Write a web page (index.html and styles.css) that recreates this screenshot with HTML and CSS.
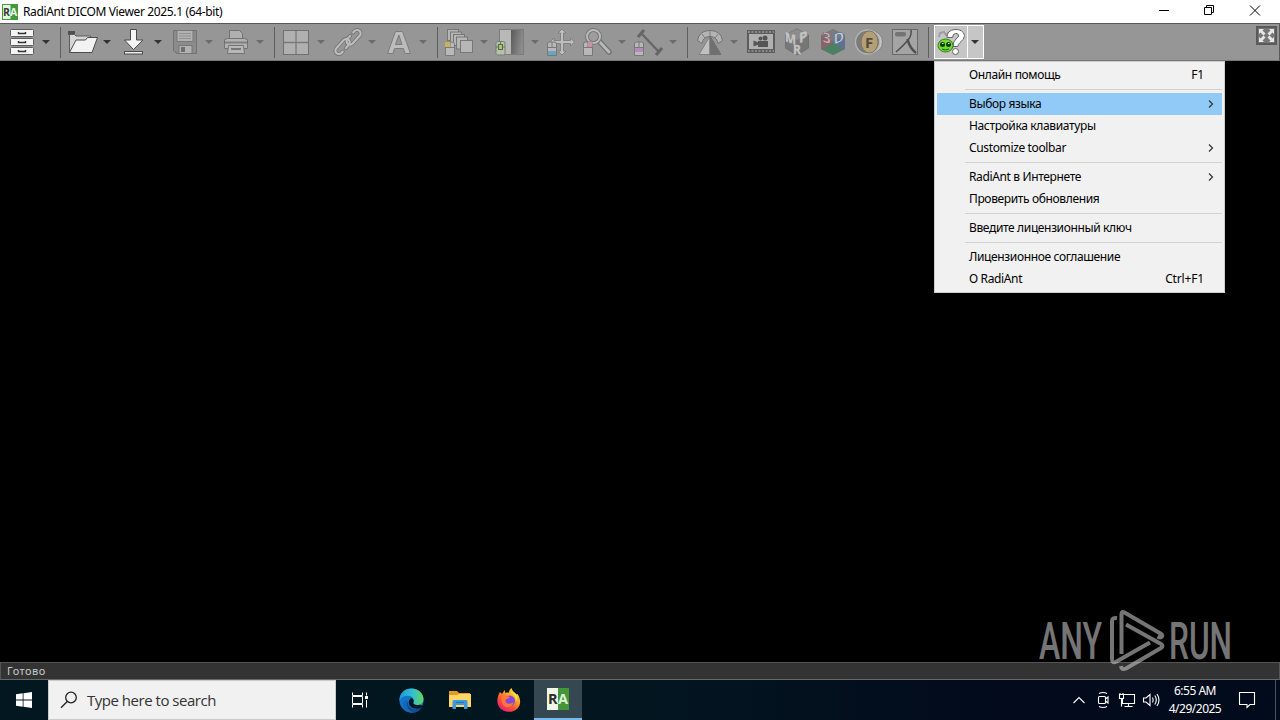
FILE: index.html
```html
<!DOCTYPE html>
<html lang="ru">

<head>
    <meta charset="UTF-8">
    <meta name="viewport" content="width=device-width, initial-scale=1.0">
    <title>RadiAnt DICOM Viewer</title>
    <link rel="stylesheet" href="styles.css">
</head>

<body>
    <div class="desktop">
        <!-- Title bar -->
        <header class="titlebar">
            <svg class="app-icon" viewBox="0 0 16 16">
                <rect width="16" height="16" fill="#3f9a3c"/>
                <rect x="1" y="1" width="7.5" height="14" fill="#e9f3e4"/>
                <text x="1" y="12" font-size="10.5" font-weight="700" fill="#33432f">R</text>
                <text x="8" y="12" font-size="10.5" font-weight="700" fill="#e9f6e4">A</text>
            </svg>
            <span class="title">RadiAnt DICOM Viewer 2025.1 (64-bit)</span>
            <div class="window-buttons">
                <svg viewBox="0 0 46 23"><path d="M19 10.500h10"/></svg>
                <svg viewBox="0 0 46 23"><path d="M18.500 7.500h7v7h-7zM20.500 7.500v-2h7v7h-2"/></svg>
                <svg viewBox="0 0 46 23"><path d="M18 5.500l10 10M28 5.500l-10 10"/></svg>
            </div>
        </header>

        <!-- Toolbar -->
        <nav class="toolbar">
            <div class="tool split">
                <svg class="icon" viewBox="0 0 32 32">
                    <g fill="#f4f4f4" stroke="#5c5c5c">
                        <rect x="4.500" y="3.500" width="23" height="7" rx="1"/>
                        <rect x="4.500" y="12.500" width="23" height="7" rx="1"/>
                        <rect x="4.500" y="21.500" width="23" height="7" rx="1"/>
                    </g>
                    <path d="M12.500 6v1.500h7V6M12.500 15v1.500h7V15M12.500 24v1.500h7V24" fill="none" stroke="#333" stroke-width="1.400"/>
                </svg>
                <i class="arrow"></i>
            </div>
            <div class="sep"></div>

            <div class="tool split">
                <svg class="icon" viewBox="0 0 32 32">
                    <path d="M1 5h7v4H1z" fill="#505050"/>
                    <path d="M2.500 26.500V8.500h5l1.500 1.500h14.500v5z" fill="#d6d6d6" stroke="#5c5c5c"/>
                    <path d="M2.500 26.500L9 14h9.500l2-2.500h10L25 26.500z" fill="#f2f2f2" stroke="#4c4c4c"/>
                </svg>
                <i class="arrow"></i>
            </div>
            <div class="tool split">
                <svg class="icon" viewBox="0 0 32 32">
                    <path d="M12.500 3.500h6v10.500h6.500L15.500 23.500 6.500 14h6z" fill="#f5f5f5" stroke="#4a4a4a"/>
                    <rect x="6.500" y="25.500" width="18" height="2.500" fill="#eee" stroke="#4a4a4a"/>
                </svg>
                <i class="arrow"></i>
            </div>
            <div class="tool split disabled">
                <svg class="icon" viewBox="0 0 32 32">
                    <path d="M4.500 4.500h23v23H8l-3.500-3z" fill="#8b8b8b" stroke="#727272"/>
                    <path d="M8 4.500h16v11H8z" fill="#b2b2b2" stroke="#777"/>
                    <path d="M10 7.500h12M10 10h12M10 12.500h12" stroke="#909090"/>
                    <path d="M10 19.500h13v8H10z" fill="#b2b2b2" stroke="#777"/>
                    <path d="M12 21h4v5h-4z" fill="#6e6e6e"/>
                </svg>
                <i class="arrow"></i>
            </div>
            <div class="tool split disabled">
                <svg class="icon" viewBox="0 0 32 32">
                    <path d="M9.500 4.500h10l3 3v6h-13z" fill="#b0b0b0" stroke="#727272"/>
                    <path d="M4.500 13.500l3-1h17l3 1v9h-23z" fill="#b2b2b2" stroke="#727272"/>
                    <path d="M5 16.500h22" stroke="#808080" stroke-width="2"/>
                    <path d="M8.500 19.500h15l1 8h-17z" fill="#b8b8b8" stroke="#727272"/>
                    <path d="M11 23h10" stroke="#777" stroke-width="2"/>
                </svg>
                <i class="arrow"></i>
            </div>
            <div class="sep"></div>

            <div class="tool split disabled">
                <svg class="icon" viewBox="0 0 32 32">
                    <rect x="2.500" y="4.500" width="25" height="24" fill="#b0b0b0" stroke="#707070"/>
                    <path d="M3 16.500h24M15 5v23" stroke="#7a7a7a" stroke-width="1.300"/>
                </svg>
                <i class="arrow"></i>
            </div>
            <div class="tool split disabled">
                <svg class="icon" viewBox="0 0 32 32">
                    <g transform="rotate(-48 16 16)" fill="none" stroke-linecap="round">
                        <g stroke="#777" stroke-width="3.800">
                            <path d="M10 18.500H14.500a3.500 3.500 0 0 0 0-7H3.500a3.500 3.500 0 0 0 0 7h2M22 13.500h-4a3.500 3.500 0 0 0 0 7H28.500a3.500 3.500 0 0 0 0-7h-2"/>
                        </g>
                        <g stroke="#bebebe" stroke-width="2">
                            <path d="M10 18.500H14.500a3.500 3.500 0 0 0 0-7H3.500a3.500 3.500 0 0 0 0 7h2M22 13.500h-4a3.500 3.500 0 0 0 0 7H28.500a3.500 3.500 0 0 0 0-7h-2"/>
                        </g>
                    </g>
                </svg>
                <i class="arrow"></i>
            </div>
            <div class="tool split disabled">
                <svg class="icon" viewBox="0 0 32 32">
                    <path d="M4.500 27.500L12.500 5.500h7l8 22h-5.500l-1.500-5h-9l-1.500 5zM12.500 18.500h6.500L15.800 9z" fill="#bcbcbc" stroke="#7c7c7c" fill-rule="evenodd"/>
                </svg>
                <i class="arrow"></i>
            </div>
            <div class="sep"></div>

            <div class="tool split disabled">
                <svg class="icon" viewBox="0 0 32 32">
                    <g fill="#b6b6b6" stroke="#777">
                        <rect x="3.500" y="3.500" width="11" height="11"/>
                        <rect x="6.500" y="6" width="11" height="11"/>
                        <rect x="9.500" y="8.500" width="11" height="11"/>
                        <rect x="12.500" y="11" width="11" height="12"/>
                        <rect x="16.500" y="14.500" width="12" height="12"/>
                    </g>
                    <path d="M1.500 20.500V18q0-2 3-2h3q3 0 3 2v11.500h-9z" fill="#b9b9b9" stroke="#7a7a7a"/>
                    <path d="M1.500 21.500h9M6 16v5" stroke="#7a7a7a"/>
                    <rect x="1" y="16" width="5" height="5" fill="#c9b25a"/>
                </svg>
                <i class="arrow"></i>
            </div>
            <div class="tool split disabled">
                <svg class="icon" viewBox="0 0 32 32">
                    <defs>
                        <linearGradient id="level" x1="0" x2="1" y1="0" y2=".3"><stop stop-color="#5a5a5a"/><stop offset="1" stop-color="#8b8b8b"/></linearGradient>
                    </defs>
                    <rect x="5" y="4" width="12" height="24" fill="#b8b8b8"/>
                    <rect x="16" y="4" width="12" height="24" fill="url(#level)"/>
                    <rect x="4.500" y="3.500" width="24" height="25" fill="none" stroke="#7c7c7c"/>
                    <rect x="1" y="15.500" width="9" height="13.500" rx="1.500" fill="#b8bfae" stroke="#73806a"/>
                    <path d="M1 21h9M5.500 16v5" stroke="#687a57"/>
                    <rect x="3.500" y="18.500" width="4" height="5" fill="#a9c081" stroke="#52703a"/>
                </svg>
                <i class="arrow"></i>
            </div>
            <div class="tool disabled">
                <svg class="icon" viewBox="0 0 32 32">
                    <path d="M16 3l4 4h-2.500v7.500h7V12l4 4-4 4v-2.500h-7V25H20l-4 4-4-4h2.500v-7.500H8V20l-4-4 4-4v2.500h6.500V7H12z" fill="#bebebe" stroke="#777" stroke-width=".8"/>
                    <path d="M1.500 22.500V18q0-2 2-2h5q2 0 2 2v11.500h-9z" fill="#b8b8b8" stroke="#777"/>
                    <path d="M2 21.500h8M6 16v5.500" stroke="#777"/>
                    <rect x="2" y="25" width="8" height="4" fill="#6ba4c2"/>
                </svg>
            </div>
            <div class="tool split disabled">
                <svg class="icon" viewBox="0 0 32 32">
                    <path d="M17 15l10 11" stroke="#6f6f6f" stroke-width="5.500" stroke-linecap="round"/>
                    <path d="M17 15l10 11" stroke="#b8b8b8" stroke-width="3" stroke-linecap="round"/>
                    <circle cx="11.500" cy="10.500" r="6.500" fill="#9e9e9e" stroke="#757575" stroke-width="4"/>
                    <circle cx="11.500" cy="10.500" r="6.500" fill="none" stroke="#bcbcbc" stroke-width="2"/>
                    <path d="M1.500 22.500V18q0-2 2-2h5q2 0 2 2v11.500h-9z" fill="#b8b8b8" stroke="#777"/>
                    <path d="M2 21.500h8M6 16v5.500" stroke="#777"/>
                    <rect x="6" y="16" width="4.500" height="5" fill="#c9929c"/>
                </svg>
                <i class="arrow"></i>
            </div>
            <div class="tool split disabled">
                <svg class="icon" viewBox="0 0 32 32">
                    <path d="M8 7l18 19" stroke="#656565" stroke-width="2.200"/>
                    <path d="M5 11l6-7M23 29l6-7" stroke="#656565" stroke-width="3"/>
                    <path d="M1.500 22.500V18q0-2 2-2h5q2 0 2 2v11.500h-9z" fill="#b8b8b8" stroke="#777"/>
                    <path d="M2 21.500h8M6 16v5.500" stroke="#777"/>
                    <rect x="2" y="22" width="8" height="4" fill="#b78cbd"/>
                </svg>
                <i class="arrow"></i>
            </div>
            <div class="sep"></div>

            <div class="tool split disabled">
                <svg class="icon" viewBox="0 0 32 32">
                    <path d="M3.500 14.500Q5 4.500 16 4.500t12.500 10l-4.500 3Q23 10.500 16 10.500t-8 7z" fill="#b4b4b4" stroke="#747474"/>
                    <path d="M8 8l3 4M16 4.500v6M24 8l-3 4" stroke="#7c7c7c"/>
                    <path d="M16 10L5 28.500h11z" fill="#c0c0c0" stroke="#808080"/>
                    <path d="M16 10l11 18.500H16z" fill="#707070" stroke="#707070"/>
                </svg>
                <i class="arrow"></i>
            </div>
            <div class="tool disabled">
                <svg class="icon" viewBox="0 0 32 32">
                    <rect x="2" y="4" width="28" height="23" fill="#5c5c5c"/>
                    <rect x="4" y="8" width="24" height="15" fill="#b0b0b0"/>
                    <path d="M3 6h26M3 25h26" stroke="#979797" stroke-width="1.500" stroke-dasharray="2 1.500"/>
                    <rect x="13" y="15" width="10" height="6" fill="#555"/>
                    <circle cx="15.500" cy="12.500" r="2" fill="#555"/>
                    <circle cx="20" cy="12" r="2.500" fill="#555"/>
                    <path d="M8.500 14.500l5 2v2l-5 2z" fill="#555"/>
                </svg>
            </div>
            <div class="tool disabled">
                <svg class="icon" viewBox="0 0 32 32">
                    <path d="M16 3l11.500 6v13L16 29 4.500 22V9z" fill="#777" stroke="#6e6e6e"/>
                    <path d="M16 3l11.500 6L16 14 4.500 9z" fill="#8c8c8c"/>
                    <g font-weight="700" fill="#c4c4c4" stroke="#c4c4c4" stroke-width=".3">
                        <text x="4.500" y="0" font-size="13" transform="matrix(.9 .3 0 1 0 14)">M</text>
                        <text x="19" y="0" font-size="14" transform="matrix(.95 -.3 0 1 0 23)">P</text>
                        <text x="12" y="28" font-size="12">R</text>
                    </g>
                </svg>
            </div>
            <div class="tool disabled">
                <svg class="icon" viewBox="0 0 32 32">
                    <path d="M16 3l12 6v14l-12 6-12-6V9z" fill="#777"/>
                    <path d="M4 9l12 6v14L4 23z" fill="#86646a"/>
                    <path d="M28 9l-12 6v14l12-6z" fill="#5f7192"/>
                    <path d="M16 3l12 6-12 6L4 9z" fill="#777b82"/>
                    <path d="M16 17l11 6-11 6-11-6z" fill="#4d8062"/>
                    <g font-size="14.500" font-weight="700" stroke-width=".4">
                        <text x="5.500" y="0" fill="#d3b3b8" stroke="#744d56" transform="matrix(1 .3 0 1 0 14)">3</text>
                        <text x="16.500" y="0" fill="#c0cddc" stroke="#475d77" transform="matrix(1 -.3 0 1 0 23.500)">D</text>
                    </g>
                </svg>
            </div>
            <div class="tool disabled">
                <svg class="icon" viewBox="0 0 32 32">
                    <circle cx="18" cy="16" r="11.500" fill="#c6c6c6" stroke="#808080"/>
                    <circle cx="14.500" cy="16" r="12" fill="#7b7b7b" stroke="#b4b4b4" stroke-width="1.300"/>
                    <ellipse cx="16.500" cy="16" rx="8.500" ry="11" fill="#b3a077" stroke="#81755c"/>
                    <text x="12" y="21.500" font-size="15" font-weight="700" fill="#534b37">F</text>
                </svg>
            </div>
            <div class="tool disabled">
                <svg class="icon" viewBox="0 0 32 32">
                    <rect x="3.500" y="3.500" width="25" height="25" fill="#a4a4a4" stroke="#696969"/>
                    <rect x="6" y="6" width="11" height="4.500" rx="2" fill="#737373"/>
                    <path d="M22 4q1 5-3 10T7 26" fill="none" stroke="#515151" stroke-width="1.600"/>
                    <path d="M18.500 13q2 9 8.500 14" fill="none" stroke="#515151" stroke-width="2.500"/>
                </svg>
            </div>
            <div class="sep"></div>

            <div class="tool split help">
                <svg class="icon" viewBox="0 0 32 32">
                    <path d="M3 11l1-4 4-1 2 3M10 10q1-4 5-3" fill="none" stroke="#a09ba6" stroke-width="2"/>
                    <path d="M11 11.500Q11 4 19 3.500t9.500 6q0 4-4.500 7-2 1.500-2 4h-5q0-5 3-7.500 3-2 2.500-4-.5-2-3-1.500-2.500 0-3 4z" fill="#fff" stroke="#666"/>
                    <circle cx="19.500" cy="25.500" r="3" fill="#fff" stroke="#666"/>
                    <ellipse cx="9.500" cy="19.500" rx="7.500" ry="6.500" fill="#6fdc34" stroke="#397d1e"/>
                    <circle cx="6.500" cy="18.500" r="2.500" fill="#183c12"/>
                    <circle cx="12.500" cy="18.500" r="2.500" fill="#183c12"/>
                    <path d="M6 17.500h1.500M12 17.500h1.500" stroke="#dfffba"/>
                    <path d="M6 23q3.500 2 7 0" fill="none" stroke="#215d12"/>
                </svg>
                <i class="arrow"></i>
            </div>

            <svg class="fullscreen" viewBox="0 0 21 19">
                <rect x="1" y="1" width="19" height="17" fill="#777" stroke="#5a5a5a" stroke-width="2"/>
                <path d="M3 8V3h5L6.500 4.500l3 3-2 2-3-3zM18 8V3h-5l1.500 1.500-3 3 2 2 3-3zM3 11v5h5l-1.500-1.500 3-3-2-2-3 3zM18 11v5h-5l1.500-1.500-3-3 2-2 3 3z" fill="#e8e8e8"/>
            </svg>
        </nav>

        <!-- Image area -->
        <main class="viewport"></main>

        <footer class="statusbar">Готово</footer>

        <!-- Windows taskbar -->
        <div class="taskbar">
            <div class="start">
                <svg width="16" height="16" viewBox="0 0 16 16"><path d="M0 2.300L6.700 1.300v6.300H0zM7.500 1.200L16 0v7.600H7.500zM0 8.400h6.700v6.300L0 13.700zM7.500 8.400H16V16l-8.500-1.200z" fill="#fff"/></svg>
            </div>
            <div class="search">
                <svg width="18" height="18" viewBox="0 0 18 18" fill="none" stroke="#222" stroke-width="1.300"><circle cx="11" cy="6.500" r="5.300"/><path d="M7.200 10.500L1 16.800"/></svg>
                <span>Type here to search</span>
            </div>
            <div class="task task-view">
                <svg width="18" height="18" viewBox="0 0 18 18" fill="none" stroke="#fff"><path d="M1.500 1.500v3h10v-3M1.500 5.500h10v7h-10zM1.500 16.500v-3h10v3M15.500 1.500v3M15.500 9v7.500"/><path d="M14 6.500h3" stroke-width="3"/></svg>
            </div>
            <div class="task">
                <svg width="25" height="25" viewBox="0 0 25 25">
                    <defs>
                        <linearGradient id="edgeTop" x1="0" x2="1"><stop stop-color="#1c98de"/><stop offset=".55" stop-color="#35bfd0"/><stop offset="1" stop-color="#62d85b"/></linearGradient>
                    </defs>
                    <circle cx="12.500" cy="12.500" r="12" fill="#1374c8"/>
                    <path d="M.5 13C0 5 6 .5 12.500.5 20 .5 24.500 6 24.500 11c0 4-3 6-6.500 6-2.500 0-4-1-3.500-2.300.8-1.500.8-3-.5-4.500C11 6.500 3 7 .5 13z" fill="url(#edgeTop)"/>
                    <path d="M9 12.500c-2 5 1 11 8 11.500-8 3-14-3-13-8 .5-3 2.500-4.500 5-3.500z" fill="#1667b7"/>
                    <path d="M9 13c-1 4 3 9 9 8 2-.3 3.500-1.200 5-2.500-1.500 3.500-4 5.500-7 6C9 24 6 17 9 13z" fill="#114c96"/>
                    <path d="M13.500 10.500c2 2 .8 3.500.8 4.500 0 1.600 2.700 2.500 6 1.700l4 1.300-1.500 1.500c-6 3-13 0-13-5 0-3 2-5 3.700-4z" fill="#021820"/>
                </svg>
            </div>
            <div class="task">
                <svg width="22" height="20" viewBox="0 0 22 20">
                    <path d="M0 1h8l2 2h11v4H0z" fill="#e59b23"/>
                    <path d="M0 5h8l2-1h12v13H0z" fill="#ffd667"/>
                    <path d="M3.500 19v-7.500q0-1.500 1.500-1.500h12q1.500 0 1.500 1.500V19H15v-4H7v4z" fill="#3c9ada"/>
                    <path d="M7 12.500h8" stroke="#2470b2"/>
                </svg>
            </div>
            <div class="task">
                <svg width="24" height="24" viewBox="0 0 24 24">
                    <defs>
                        <linearGradient id="fox" x1=".9" x2=".2" y1="0" y2="1"><stop stop-color="#fff047"/><stop offset=".35" stop-color="#ffad2e"/><stop offset=".65" stop-color="#ff5530"/><stop offset="1" stop-color="#e51584"/></linearGradient>
                    </defs>
                    <path d="M3 4l2 2c1-2 2-3 3-4v3c2-.8 3-.5 4-.2C12 3 13 1 14.500 0c.5 3 3 4 5 6.500l1-.5c4 6 3 11 0 14.500-4 4-11 4.500-16 1S-1 10 3 4z" fill="url(#fox)"/>
                    <circle cx="12.500" cy="13" r="5.500" fill="#8447dc"/>
                    <path d="M4 9c3-3 6-1 9 0-1 2-4 1-4.500 4 1 4 6 3 8 1-1 6-8 7-11 2z" fill="#ff7636"/>
                    <path d="M14 4c3 2 5 5 5 9 2-2 1-5 0-7z" fill="#ffe34a"/>
                </svg>
            </div>
            <div class="task active">
                <svg width="22" height="22" viewBox="0 0 22 22">
                    <rect width="22" height="22" fill="#439739"/>
                    <rect width="11" height="22" fill="#f0f7e8"/>
                    <text x="1" y="16" font-size="14.500" font-weight="700" fill="#273026">R</text>
                    <text x="11" y="16" font-size="14.500" font-weight="700" fill="#dff0d7">A</text>
                </svg>
            </div>

            <div class="tray">
                <svg viewBox="0 0 24 24"><path d="M6.500 15l5.500-5.500 5.500 5.500"/></svg>
                <svg viewBox="0 0 24 24"><path d="M8.500 8.500h5q1 0 1 1v5q0 1-1 1h-5q-1 0-1-1v-5q0-1 1-1zM14.500 11l2.500-2v6l-2.500-2M8 5.500q4-2 8 0M8 18.500q4 2 8 0"/></svg>
                <svg viewBox="0 0 24 24"><path d="M8 6.500h11.500v9H7.500V11M13.500 15.500v3M9.500 18.500h8M4.500 6.500h4v4h-4zM6.500 10.500v8M5 5v2M8 5v2"/></svg>
                <svg viewBox="0 0 24 24"><path d="M4.500 10v4h2.500l4 3.500v-11L7 10zM13.500 9.500q1.500 2.500 0 5M15.800 7.500q3 4.500 0 9M18 6q4 6 0 12"/></svg>
                <div class="clock">
                    <span>6:55 AM</span>
                    <span>4/29/2025</span>
                </div>
                <svg class="notice" viewBox="0 0 24 24"><path d="M4.500 4.500h15v12H15l-3 3v-3H4.500z"/></svg>
                <div class="show-desktop"></div>
            </div>
        </div>

        <!-- Help menu -->
        <ul class="menu">
            <li class="item"><span>Онлайн помощь</span><kbd>F1</kbd></li>
            <li class="divider"></li>
            <li class="item selected"><span>Выбор языка</span><svg class="more" viewBox="0 0 6 8"><path d="M1 .5L4.500 4 1 7.500"/></svg></li>
            <li class="item"><span>Настройка клавиатуры</span></li>
            <li class="item"><span>Customize toolbar</span><svg class="more" viewBox="0 0 6 8"><path d="M1 .5L4.500 4 1 7.500"/></svg></li>
            <li class="divider"></li>
            <li class="item"><span>RadiAnt в Интернете</span><svg class="more" viewBox="0 0 6 8"><path d="M1 .5L4.500 4 1 7.500"/></svg></li>
            <li class="item"><span>Проверить обновления</span></li>
            <li class="divider"></li>
            <li class="item"><span>Введите лицензионный ключ</span></li>
            <li class="divider"></li>
            <li class="item"><span>Лицензионное соглашение</span></li>
            <li class="item"><span>О RadiAnt</span><kbd>Ctrl+F1</kbd></li>
        </ul>

        <!-- Watermark -->
        <svg class="watermark" viewBox="0 0 240 70">
            <g class="watermark-text">
                <text x="3" y="54" textLength="63" lengthAdjust="spacingAndGlyphs">ANY</text>
                <text x="133" y="54" textLength="63" lengthAdjust="spacingAndGlyphs">RUN</text>
            </g>
            <g fill="none" stroke="#c4c4c4" stroke-width="4" stroke-linejoin="round">
                <path d="M85.500 49V9q0-3 3-1.500l36 21q3 2 1 3.500-1.500 1-4-.5"/>
                <path d="M81 13q-5-.5-5 3v38q0 5 4.500 2.500l33.500-19"/>
                <path d="M90 19.500l35 19.500q3 2 0 4L90 63.500q-4.500 2-5-2.500"/>
            </g>
        </svg>
    </div>
</body>

</html>
```

FILE: styles.css
```css
/* General Styling */
* {
    box-sizing: border-box;
}

body {
    margin: 0;
    background: #000;
    font-family: 'Noto Sans', 'Open Sans', sans-serif;
    font-size: 12px;
    color: #000;
}

svg text {
    font-family: 'Open Sans', sans-serif;
}

.desktop {
    position: relative;
    width: 1280px;
    height: 720px;
    display: flex;
    flex-direction: column;
    overflow: hidden;
}

/* Title bar */
.titlebar {
    height: 23px;
    background: #fff;
    display: flex;
    align-items: center;
    padding-left: 2px;
}

.app-icon {
    width: 16px;
    height: 16px;
    margin-right: 5px;
}

.title {
    letter-spacing: -0.36px;
    white-space: nowrap;
}

.window-buttons {
    display: flex;
    margin-left: auto;
    margin-right: 2px;
}

.window-buttons svg {
    width: 46px;
    height: 23px;
    fill: none;
    stroke: #000;
}

/* Toolbar */
.toolbar {
    height: 38px;
    background: #969696;
    border-top: 1px solid #5a5a5a;
    border-bottom: 1px solid #777;
    border-right: 1px solid #5a5a5a;
    padding-left: 4px;
    display: flex;
    align-items: center;
}

.tool {
    display: flex;
    align-items: center;
    justify-content: center;
    width: 36px;
    height: 36px;
    flex: none;
}

.split {
    width: 51px;
    justify-content: flex-start;
    padding-left: 2px;
}

.icon {
    width: 32px;
    height: 32px;
}

.arrow {
    margin-left: 4px;
    border: 4px solid transparent;
    border-top-color: #333;
    border-bottom: 0;
}

.disabled .arrow {
    border-top-color: #6c6c6c;
}

.sep {
    width: 10px;
    height: 31px;
    flex: none;
    background: linear-gradient(#5e5e5e, #5e5e5e) center / 1px 100% no-repeat;
}

.help {
    width: 50px;
    height: 34px;
    margin-left: 1px;
    padding-left: 1px;
    background: linear-gradient(90deg, #c6c6c6 32px, #fff 32px, #fff 33px, #c6c6c6 33px);
    border: 1px solid #fff;
}

.help .arrow {
    margin-left: 3px;
}

.fullscreen {
    width: 21px;
    height: 19px;
    margin-left: auto;
    margin-right: 2px;
    margin-bottom: 13px;
}

/* Image area and status bar */
.viewport {
    flex: 1;
    background: #000;
}

.statusbar {
    height: 18px;
    line-height: 15px;
    padding-left: 6px;
    background: #333;
    border: 1px solid #555;
    border-bottom-color: #686868;
    color: #c8c8c8;
    font-size: 11px;
    letter-spacing: 0.5px;
}

/* Help menu */
.menu {
    position: absolute;
    left: 934px;
    top: 61px;
    width: 291px;
    height: 232px;
    margin: 0;
    padding: 2px 2px;
    list-style: none;
    background: #f1f1f1;
    border: 1px solid #ccc;
}

.item {
    display: flex;
    align-items: center;
    height: 22px;
    padding-left: 32px;
    padding-right: 18px;
    letter-spacing: -0.36px;
    white-space: nowrap;
}

.item span,
.item kbd {
    padding-bottom: 1px;
}

.item kbd {
    margin-left: auto;
    font-family: inherit;
    letter-spacing: -0.15px;
}

.selected {
    background: #91c9f7;
}

.more {
    width: 6px;
    height: 8px;
    margin-left: auto;
    margin-right: -10px;
    fill: none;
    stroke: #333;
    stroke-width: 1.2;
}

.divider {
    height: 7px;
    margin-left: 28px;
    background: linear-gradient(#d2d2d2, #d2d2d2) 0 3px / 100% 1px no-repeat;
}

/* Taskbar */
.taskbar {
    display: flex;
    height: 40px;
    background: linear-gradient(90deg, #02171f, #031620 50%, #020a1c 78%, #020b1c);
    color: #fff;
}

.start {
    display: flex;
    align-items: center;
    justify-content: center;
    width: 48px;
}

.search {
    display: flex;
    align-items: center;
    width: 288px;
    padding-left: 11px;
    background: #f1f1f1;
    border: 1px solid #ccc;
    color: #333;
    font-size: 15px;
}

.search span {
    margin-left: 9px;
    font-family: 'Open Sans', sans-serif;
    letter-spacing: -0.48px;
}

.task {
    display: flex;
    align-items: center;
    justify-content: center;
    width: 48px;
    margin-right: 1px;
}

.task-view {
    margin-right: 3px;
}

.active {
    background: #354751;
    border-bottom: 2px solid #76b9ed;
}

.tray {
    display: flex;
    align-items: center;
    margin-left: auto;
}

.tray svg {
    width: 24px;
    height: 24px;
    fill: none;
    stroke: #fff;
    stroke-width: 1.1;
}

.clock {
    display: flex;
    flex-direction: column;
    align-items: center;
    width: 64px;
    line-height: 18px;
    letter-spacing: -0.5px;
}

.tray .notice {
    margin: 0 16px 0 8px;
}

.show-desktop {
    width: 5px;
    height: 40px;
    border-left: 1px solid #4c535e;
}

/* Watermark */
.watermark {
    position: absolute;
    left: 1036px;
    top: 605px;
    width: 240px;
    height: 70px;
    opacity: 0.6;
}

.watermark-text text {
    font-family: 'Roboto', sans-serif;
    font-size: 51px;
    font-weight: 500;
    fill: #c4c4c4;
}
```
